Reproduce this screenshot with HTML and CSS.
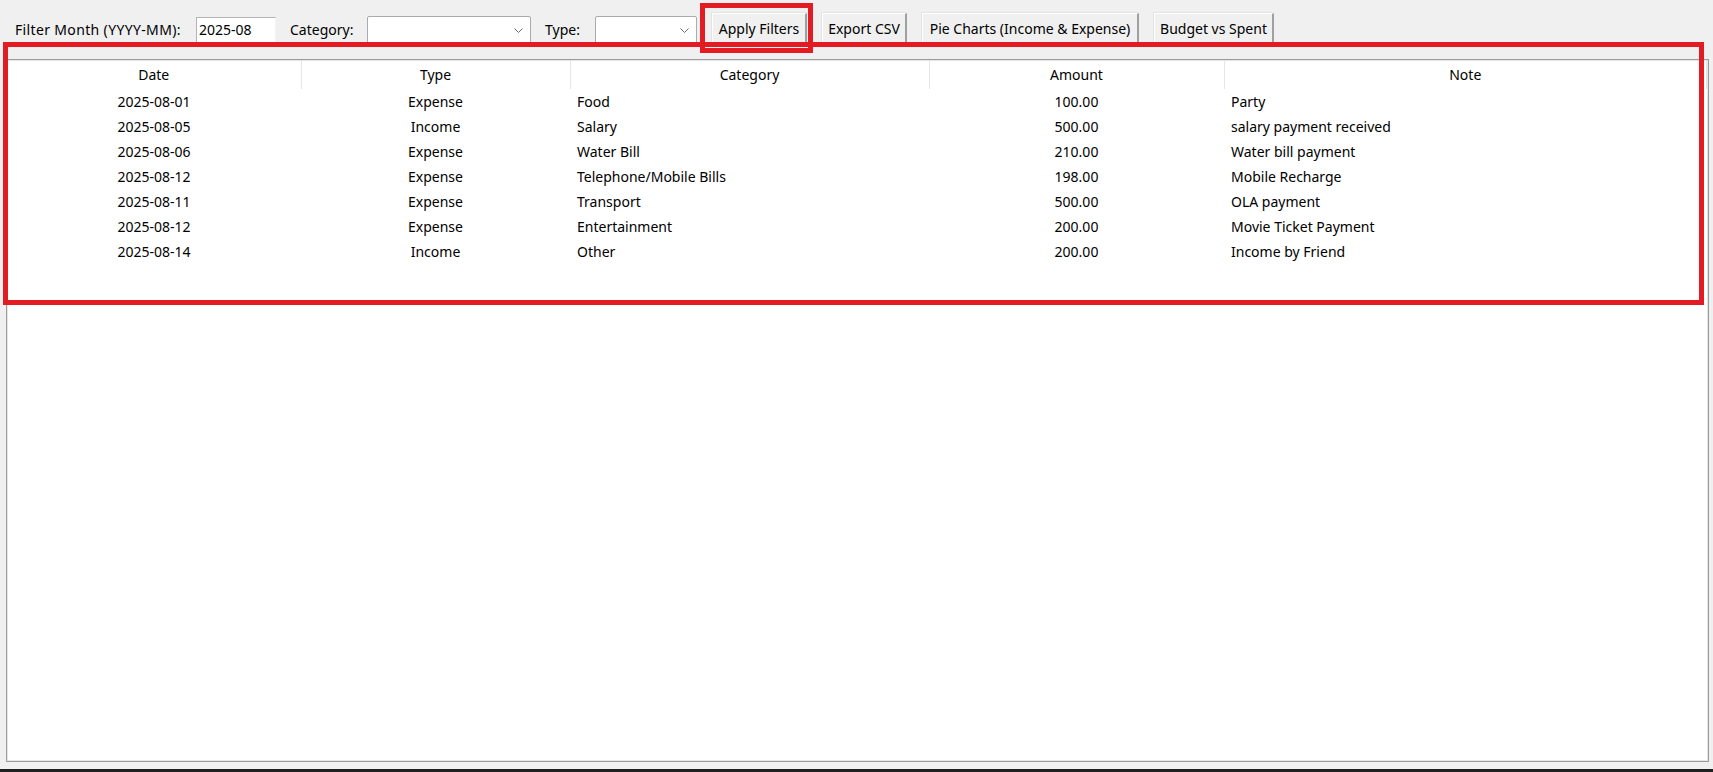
FILE: index.html
```html
<!DOCTYPE html>
<html>
<head>
<meta charset="utf-8">
<title>Transactions</title>
<link rel="stylesheet" href="styles.css">
</head>
<body>
<div class="app">
  <div class="toolbar">
    <span class="label lbl-month">Filter Month (YYYY-MM):</span>
    <div class="entry">2025-08</div>
    <span class="label lbl-cat">Category:</span>
    <div class="combo combo-cat">
      <svg class="chev" width="9" height="5" viewBox="0 0 9 5"><polyline points="0.5,0.5 4.5,4.5 8.5,0.5" fill="none" stroke="#6a6a6a" stroke-width="1"/></svg>
    </div>
    <span class="label lbl-type">Type:</span>
    <div class="combo combo-type">
      <svg class="chev" width="9" height="5" viewBox="0 0 9 5"><polyline points="0.5,0.5 4.5,4.5 8.5,0.5" fill="none" stroke="#6a6a6a" stroke-width="1"/></svg>
    </div>
    <div class="buttons">
      <button class="btn btn-apply">Apply Filters</button>
      <button class="btn btn-export">Export CSV</button>
      <button class="btn btn-pie">Pie Charts (Income &amp; Expense)</button>
      <button class="btn btn-budget">Budget vs Spent</button>
    </div>
  </div>

  <div class="tree">
    <table class="grid">
      <colgroup>
        <col class="c-date"><col class="c-type"><col class="c-cat"><col class="c-amt"><col class="c-note">
      </colgroup>
      <thead>
        <tr><th>Date</th><th>Type</th><th>Category</th><th>Amount</th><th>Note</th></tr>
      </thead>
      <tbody>
        <tr><td class="ctr">2025-08-01</td><td class="ctr">Expense</td><td class="lft">Food</td><td class="ctr">100.00</td><td class="lft">Party</td></tr>
        <tr><td class="ctr">2025-08-05</td><td class="ctr">Income</td><td class="lft">Salary</td><td class="ctr">500.00</td><td class="lft">salary payment received</td></tr>
        <tr><td class="ctr">2025-08-06</td><td class="ctr">Expense</td><td class="lft">Water Bill</td><td class="ctr">210.00</td><td class="lft">Water bill payment</td></tr>
        <tr><td class="ctr">2025-08-12</td><td class="ctr">Expense</td><td class="lft">Telephone/Mobile Bills</td><td class="ctr">198.00</td><td class="lft">Mobile Recharge</td></tr>
        <tr><td class="ctr">2025-08-11</td><td class="ctr">Expense</td><td class="lft">Transport</td><td class="ctr">500.00</td><td class="lft">OLA payment</td></tr>
        <tr><td class="ctr">2025-08-12</td><td class="ctr">Expense</td><td class="lft">Entertainment</td><td class="ctr">200.00</td><td class="lft">Movie Ticket Payment</td></tr>
        <tr><td class="ctr">2025-08-14</td><td class="ctr">Income</td><td class="lft">Other</td><td class="ctr">200.00</td><td class="lft">Income by Friend</td></tr>
      </tbody>
    </table>
  </div>

  <div class="taskbar"></div>

  <div class="mark mark-table"></div>
  <div class="mark mark-apply"></div>
</div>
</body>
</html>
```

FILE: styles.css
```css
* { box-sizing: border-box; }

html, body {
  margin: 0;
  padding: 0;
  background: #f0f0f0;
}

body {
  font-family: "Noto Sans", "Open Sans", "DejaVu Sans", sans-serif;
  font-size: 14px;
  color: #000;
}

.app {
  position: relative;
  width: 1713px;
  height: 772px;
  overflow: hidden;
  display: flex;
  flex-direction: column;
}

/* ---------- toolbar ---------- */
.toolbar {
  flex: 0 0 59px;
  display: flex;
  align-items: center;
  gap: 14px;
  padding: 13px 0 14px 15px;
}

.label {
  white-space: nowrap;
  line-height: 20px;
  flex: 0 0 auto;
  margin-top: 2px;
}

.lbl-month { width: 167px; letter-spacing: 0.35px; }
.lbl-cat { width: 63px; }
.lbl-type { width: 36px; }

.entry {
  flex: 0 0 80px;
  height: 26px;
  margin-top: 2px;
  background: #fff;
  border-top: 1px solid #b4b4b4;
  border-left: 1px solid #b4b4b4;
  border-right: 1px solid #f4f4f4;
  border-bottom: 1px solid #f4f4f4;
  padding: 0 0 0 2px;
  line-height: 24px;
  white-space: nowrap;
}

.combo {
  height: 28px;
  margin-top: 2px;
  background: #fff;
  border: 1px solid #ababab;
  border-radius: 2px;
  display: flex;
  align-items: center;
  justify-content: flex-end;
  padding-right: 7px;
}

.combo-cat { flex: 0 0 164px; }
.combo-type { flex: 0 0 102px; }

.chev { display: block; }

.buttons {
  display: flex;
  gap: 15px;
  margin-left: 1px;
}

.btn {
  height: 32px;
  padding: 0;
  margin: 0;
  font: inherit;
  color: #000;
  background: #f0f0f0;
  border-style: solid;
  border-width: 1px 2px 2px 1px;
  border-color: #ffffff #a0a0a0 #a0a0a0 #ffffff;
  box-shadow: -1px -1px 0 #e3e3e3;
  white-space: nowrap;
  line-height: 30px;
  text-align: center;
}

.btn-apply { width: 95px; }
.btn-export { width: 85px; }
.btn-pie { width: 217px; }
.btn-budget { width: 120px; }

/* ---------- tree view ---------- */
.tree {
  flex: 1 1 auto;
  margin: 0 4px 7px 6px;
  background: #fff;
  border: 1px solid #9c9c9c;
  box-shadow: inset 0 0 0 1px #e6e6e6;
  padding: 0 1px 0 0;
}

.grid {
  border-collapse: collapse;
  table-layout: fixed;
  width: 100%;
}

.c-date { width: 294px; }
.c-type { width: 269px; }
.c-cat { width: 359px; }
.c-amt { width: 295px; }
.c-note { width: auto; }

.grid th {
  height: 29px;
  font-weight: normal;
  text-align: center;
  padding: 0;
  border-right: 1px solid #e5e5e5;
  white-space: nowrap;
}

.grid td {
  height: 25px;
  padding: 0;
  white-space: nowrap;
}

.grid td.ctr { text-align: center; }
.grid td.lft { text-align: left; padding-left: 7px; }

.taskbar {
  flex: 0 0 3px;
  background: #1f1f1f;
}

/* ---------- annotation overlays ---------- */
.mark {
  position: absolute;
  border: 5px solid #e31b23;
  pointer-events: none;
}

.mark-table {
  left: 3px;
  top: 42px;
  width: 1701px;
  height: 263px;
}

.mark-apply {
  left: 700px;
  top: 3px;
  width: 113px;
  height: 50px;
}
```
